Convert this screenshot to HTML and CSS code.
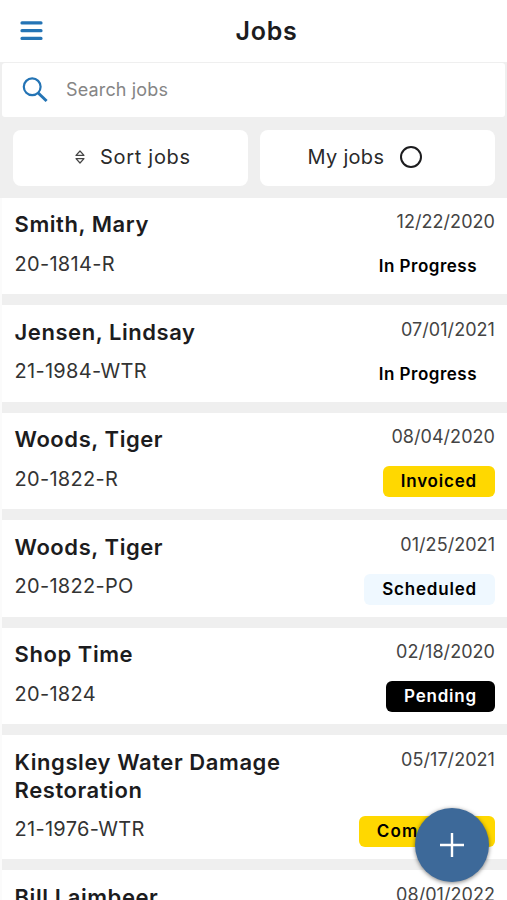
FILE: index.html
```html
<!DOCTYPE html>
<html lang="en">
<head>
  <meta charset="UTF-8">
  <meta name="viewport" content="width=device-width, initial-scale=1.0">
  <title>Jobs</title>
  <link rel="stylesheet" href="styles.css">
</head>
<body>
  <header class="header">
    <svg class="menu-icon" width="23" height="20" viewBox="0 0 23 20">
      <path d="M2 1.9H21M2 9.7H21M2 17.4H21" stroke="#2474b5" stroke-width="3.2" stroke-linecap="round"/>
    </svg>
    <h1 class="title">Jobs</h1>
  </header>

  <div class="search">
    <svg class="search-icon" width="26" height="26" viewBox="0 0 26 26" fill="none" stroke="#2474b5">
      <circle cx="10.2" cy="9.8" r="8.4" stroke-width="2.2"/>
      <path d="M16.2 16L24.6 24" stroke-width="3"/>
    </svg>
    <span class="placeholder">Search jobs</span>
  </div>

  <div class="filters">
    <div class="filter sort">
      <svg class="sort-icon" width="10" height="14" viewBox="0 0 10 14" fill="none" stroke="#444" stroke-width="1.2" stroke-linejoin="round">
        <path d="M5 1L9 5.4H1ZM5 13L9 8.6H1Z"/>
      </svg>
      <span class="filter-text">Sort jobs</span>
    </div>
    <div class="filter mine">
      <span class="filter-text">My jobs</span>
      <span class="radio"></span>
    </div>
  </div>

  <main class="jobs">
    <div class="job">
      <div class="info"><h2>Smith, Mary</h2><p>20-1814-R</p></div>
      <div class="meta"><span class="date">12/22/2020</span><span class="badge progress">In Progress</span></div>
    </div>
    <div class="job">
      <div class="info"><h2>Jensen, Lindsay</h2><p>21-1984-WTR</p></div>
      <div class="meta"><span class="date">07/01/2021</span><span class="badge progress">In Progress</span></div>
    </div>
    <div class="job">
      <div class="info"><h2>Woods, Tiger</h2><p>20-1822-R</p></div>
      <div class="meta"><span class="date">08/04/2020</span><span class="badge invoiced">Invoiced</span></div>
    </div>
    <div class="job">
      <div class="info"><h2>Woods, Tiger</h2><p>20-1822-PO</p></div>
      <div class="meta"><span class="date">01/25/2021</span><span class="badge scheduled">Scheduled</span></div>
    </div>
    <div class="job">
      <div class="info"><h2>Shop Time</h2><p>20-1824</p></div>
      <div class="meta"><span class="date">02/18/2020</span><span class="badge pending">Pending</span></div>
    </div>
    <div class="job">
      <div class="info"><h2>Kingsley Water Damage Restoration</h2><p>21-1976-WTR</p></div>
      <div class="meta"><span class="date">05/17/2021</span><span class="badge completed">Completed</span></div>
    </div>
    <div class="job">
      <div class="info"><h2>Bill Laimbeer</h2></div>
      <div class="meta"><span class="date">08/01/2022</span></div>
    </div>
  </main>

  <div class="add">
    <svg width="26" height="26" viewBox="0 0 26 26">
      <path d="M13 1V25M1 13H25" stroke="#fff" stroke-width="2.4"/>
    </svg>
  </div>
</body>
</html>
```
FILE: styles.css
```css
* {
  margin: 0;
  padding: 0;
  box-sizing: border-box;
}

body {
  height: 900px;
  overflow: hidden;
  background: #efefef;
  color: #1c1c1e;
  font-family: Inter, "Liberation Sans", sans-serif;
}

svg {
  display: block;
  flex: none;
}

.header {
  display: grid;
  grid-template-columns: 60px 1fr 60px;
  align-items: center;
  height: 62px;
  background: #fff;
}

.menu-icon {
  margin: 0 0 0 20px;
}

.title {
  padding: 0 0 1px 26px;
  text-align: center;
  font-size: 25px;
  font-weight: 600;
  line-height: 30px;
  letter-spacing: 0.8px;
}

.search {
  display: flex;
  align-items: center;
  gap: 18px;
  height: 54px;
  margin: 1px 2px 0;
  padding-left: 20px;
  background: #fff;
  border-radius: 3px;
}

.placeholder {
  padding-bottom: 1px;
  color: #858585;
  font-size: 18px;
  letter-spacing: 0.15px;
}

.filters {
  display: grid;
  grid-template-columns: 235px 235px;
  gap: 12px;
  height: 80.5px;
  padding: 13px 0 12px 13px;
}

.filter {
  display: flex;
  align-items: center;
  background: #fff;
  border-radius: 8px;
}

.sort {
  gap: 15px;
  padding-left: 62px;
  letter-spacing: 0.7px;
}

.sort-icon {
  margin-bottom: 2px;
}

.mine {
  gap: 16px;
  padding-left: 47.5px;
  letter-spacing: 0.3px;
}

.filter-text {
  padding-bottom: 2px;
  font-size: 20px;
  color: #2a2a2a;
}

.radio {
  width: 22px;
  height: 22px;
  margin-bottom: 1px;
  border: 2.5px solid #1c1c1e;
  border-radius: 50%;
}

.jobs {
  display: flex;
  flex-direction: column;
  gap: 11px;
  border-left: 2px solid #fbfbfb;
}

.job {
  display: flex;
  flex: none;
  justify-content: space-between;
  min-height: 96.5px;
  padding: 12.5px 12px 12px 12.5px;
  background: #fff;
}

.info {
  width: 290px;
}

.info h2 {
  font-size: 22px;
  font-weight: 600;
  line-height: 28px;
  letter-spacing: 0.57px;
}

.info p {
  margin-top: 13.5px;
  padding-bottom: 6px;
  color: #333;
  font-size: 20px;
  line-height: 24px;
  letter-spacing: 0.3px;
}

.meta {
  display: flex;
  flex-direction: column;
  justify-content: space-between;
  align-items: flex-end;
}

.date {
  color: #444;
  font-size: 18px;
  line-height: 24px;
  letter-spacing: 0.05px;
}

.badge {
  height: 31px;
  padding: 0 18px;
  border-radius: 6px;
  color: #000;
  font-size: 17px;
  font-weight: 600;
  line-height: 30px;
  letter-spacing: 0.8px;
}

.progress {
  letter-spacing: 0.5px;
}

.invoiced,
.completed {
  background: #ffd800;
}

.completed {
  letter-spacing: 1.15px;
}

.scheduled {
  background: #eff8ff;
}

.pending {
  background: #000;
  color: #fff;
}

.add {
  position: fixed;
  top: 808px;
  left: 415px;
  display: flex;
  align-items: center;
  justify-content: center;
  width: 74px;
  height: 74px;
  background: #3d6999;
  border-radius: 50%;
  box-shadow: 0 1px 4px rgba(0, 0, 0, 0.5);
}
```
